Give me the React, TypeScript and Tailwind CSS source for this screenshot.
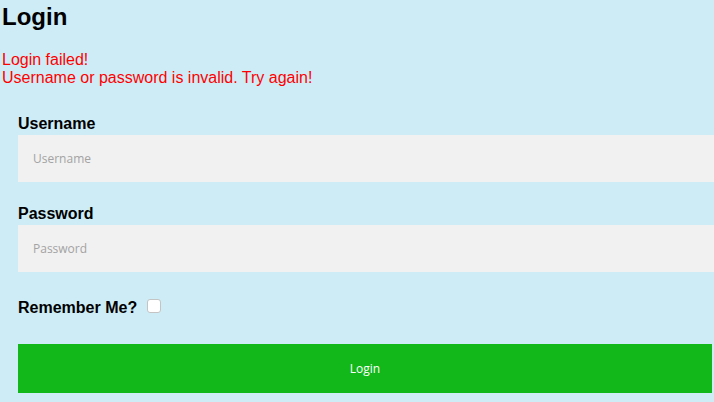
export default function App() {
  return (
    <div className="min-h-screen w-full overflow-hidden bg-[#cdecf6] px-[2px] font-['Liberation_Sans',Arial,sans-serif] text-black">
      <h1 className="pt-[3px] text-[24px] font-bold leading-[28px]">Login</h1>

      <div className="mt-[20px] text-[16px] leading-[18px] text-[#ff0000]">
        <p>Login failed!</p>
        <p>Username or password is invalid. Try again!</p>
      </div>

      <form className="pl-[16px]" onSubmit={(e) => e.preventDefault()}>
        <label htmlFor="username" className="mt-[28px] block text-[16px] font-bold leading-[18px]">
          Username
        </label>
        <input
          id="username"
          type="text"
          placeholder="Username"
          className="mt-[2px] block h-[47px] w-[calc(100%+2px)] bg-[#f1f1f1] px-[15px] font-['Open_Sans',sans-serif] text-[12px] text-gray-700 placeholder:text-[#a3a3a3] focus:outline-none"
        />

        <label htmlFor="password" className="mt-[23px] block text-[16px] font-bold leading-[18px]">
          Password
        </label>
        <input
          id="password"
          type="password"
          placeholder="Password"
          className="mt-[2px] block h-[47px] w-[calc(100%+2px)] bg-[#f1f1f1] px-[15px] font-['Open_Sans',sans-serif] text-[12px] text-gray-700 placeholder:text-[#a3a3a3] focus:outline-none"
        />

        <div className="mt-[27px] flex items-start">
          <label htmlFor="remember" className="text-[16px] font-bold leading-[18px]">
            Remember Me?
          </label>
          <input
            id="remember"
            type="checkbox"
            className="ml-[10px] mt-0 h-[14px] w-[14px] appearance-none rounded-[3px] border border-[#c4c4c4] bg-white"
          />
        </div>

        <button
          type="submit"
          className="mt-[27px] block h-[49px] w-full bg-[#12b81a] font-['Open_Sans',sans-serif] text-[12px] text-white"
        >
          Login
        </button>
      </form>
    </div>
  );
}
